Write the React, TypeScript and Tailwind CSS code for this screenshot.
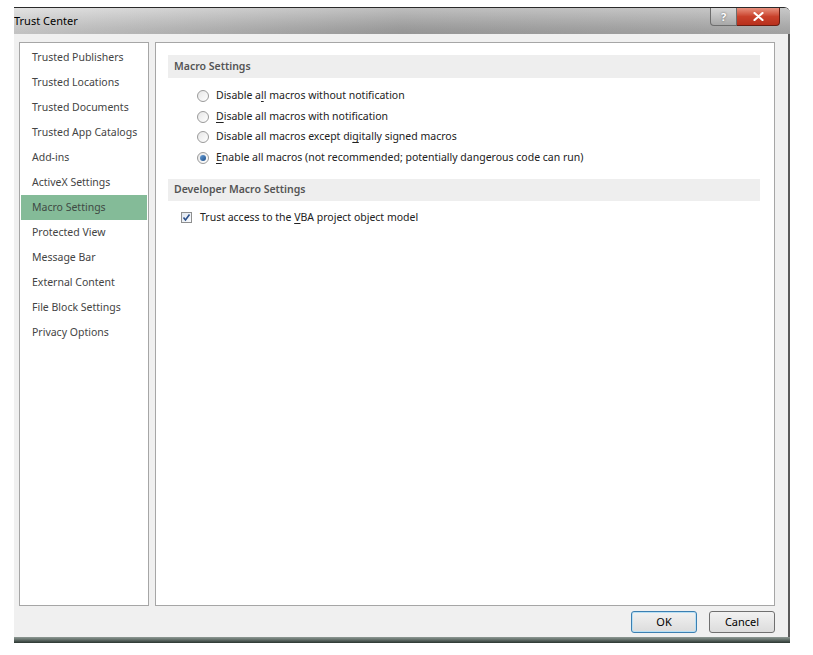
import React from "react";

const navItems = [
  "Trusted Publishers",
  "Trusted Locations",
  "Trusted Documents",
  "Trusted App Catalogs",
  "Add-ins",
  "ActiveX Settings",
  "Macro Settings",
  "Protected View",
  "Message Bar",
  "External Content",
  "File Block Settings",
  "Privacy Options",
];

function Radio({ checked }: { checked?: boolean }) {
  return (
    <span className="w-[12px] h-[12px] rounded-full border border-[#9a9a9a] bg-gradient-to-br from-[#e6e6e6] to-[#ffffff] flex items-center justify-center shrink-0">
      {checked && <span className="w-[6px] h-[6px] rounded-full bg-gradient-to-br from-[#6aa0d8] to-[#1c4f8a]" />}
    </span>
  );
}

function U({ children }: { children: React.ReactNode }) {
  return <span className="underline underline-offset-2">{children}</span>;
}

export default function App() {
  const radios: { label: React.ReactNode; checked?: boolean }[] = [
    { label: <>Disable a<U>l</U>l macros without notification</> },
    { label: <><U>D</U>isable all macros with notification</> },
    { label: <>Disable all macros except di<U>g</U>itally signed macros</> },
    { label: <><U>E</U>nable all macros (not recommended; potentially dangerous code can run)</>, checked: true },
  ];

  return (
    <div
      className="w-[813px] h-[655px] bg-white pt-[7px] pl-[14px]"
      style={{ fontFamily: '"Noto Sans", "Open Sans", sans-serif' }}
    >
      <div className="w-[776px] h-[636px] flex flex-col border-t border-[#2a2a2a] rounded-tr-[6px] overflow-hidden">
        {/* title bar */}
        <div className="h-[26px] flex items-start bg-gradient-to-r from-[#d8d8d8] via-[#a6a6a6] to-[#b4b4b4] relative">
          <div className="absolute inset-0 bg-gradient-to-b from-[#ffffff44] to-[#00000018]" />
          <span className="relative mt-[5px] text-[11px] text-black leading-[16px]">Trust Center</span>
          <div className="relative ml-auto mr-[10px] flex">
            <div className="w-[27px] h-[18px] rounded-bl-[4px] border border-[#6d6d6d] border-t-0 bg-gradient-to-b from-[#d8d8d8] to-[#a8a8a8] flex items-center justify-center text-[11px] font-bold text-white leading-none" style={{ textShadow: "0 0 2px #555" }}>
              ?
            </div>
            <div className="w-[43px] h-[18px] rounded-br-[4px] border border-[#6a1d12] border-t-0 border-l-0 bg-gradient-to-b from-[#e8907e] via-[#c9412b] to-[#b8301c] flex items-center justify-center">
              <svg width="11" height="9" viewBox="0 0 11 9">
                <path d="M1.5 1 L9.5 8 M9.5 1 L1.5 8" stroke="#fff" strokeWidth="2.2" strokeLinecap="round" />
              </svg>
            </div>
          </div>
        </div>

        {/* body */}
        <div className="flex-1 flex flex-col bg-[#f0f0f0] pl-[5px] pr-[13px] pt-[8px] border-r-2 border-[#5a5a5a]">
          <div className="flex gap-[6px] h-[564px]">
            <div className="w-[130px] bg-white border border-[#a6a6a6] pt-[2px] px-[1px]">
              {navItems.map((item) => (
                <div
                  key={item}
                  className={
                    "h-[25px] flex items-center pl-[11px] text-[10.5px] whitespace-nowrap " +
                    (item === "Macro Settings" ? "bg-[#84bb98] text-[#3f4a44]" : "text-[#444444]")
                  }
                >
                  {item}
                </div>
              ))}
            </div>
            <div className="flex-1 bg-white border border-[#a6a6a6] pt-[12px] pl-[12px] pr-[14px]">
              <div className="h-[23px] bg-[#eeeeee] flex items-center pl-[6px] text-[10.5px] font-semibold text-[#555555]">
                Macro Settings
              </div>
              <div className="pl-[29px] pt-[8px] flex flex-col">
                {radios.map((r, i) => (
                  <div key={i} className="h-[20.5px] flex items-center gap-[7px] text-[10.5px] text-[#222222] whitespace-nowrap">
                    <Radio checked={r.checked} />
                    <span>{r.label}</span>
                  </div>
                ))}
              </div>
              <div className="mt-[11px] h-[22px] bg-[#eeeeee] flex items-center pl-[6px] text-[10.5px] font-semibold text-[#555555]">
                Developer Macro Settings
              </div>
              <div className="pl-[13px] pt-[9px] flex items-center gap-[8px] text-[10.5px] text-[#222222]">
                <span className="w-[11px] h-[11px] border border-[#8e8f8f] bg-gradient-to-br from-[#dfe6ef] to-[#fafbfd] flex items-center justify-center">
                  <svg width="9" height="9" viewBox="0 0 9 9">
                    <path d="M1.5 4.5 L3.5 7 L7.5 1.5" stroke="#2b4f8a" strokeWidth="1.6" fill="none" />
                  </svg>
                </span>
                <span>Trust access to the <U>V</U>BA project object model</span>
              </div>
            </div>
          </div>
          <div className="flex justify-end gap-[12px] mt-[5px]">
            <button className="w-[66px] h-[22px] rounded-[3px] border border-[#3c7fb1] bg-gradient-to-b from-[#f2f2f2] to-[#dcdcdc] text-[11px] text-black shadow-[inset_0_0_0_1px_#b8e0f5]">
              OK
            </button>
            <button className="w-[66px] h-[22px] rounded-[3px] border border-[#707070] bg-gradient-to-b from-[#f2f2f2] to-[#dcdcdc] text-[11px] text-black">
              Cancel
            </button>
          </div>
          <div className="flex-1" />
        </div>
        <div className="h-[6px] bg-gradient-to-b from-[#8f9a95] via-[#5f6b66] to-[#2a3530]" />
      </div>
    </div>
  );
}
